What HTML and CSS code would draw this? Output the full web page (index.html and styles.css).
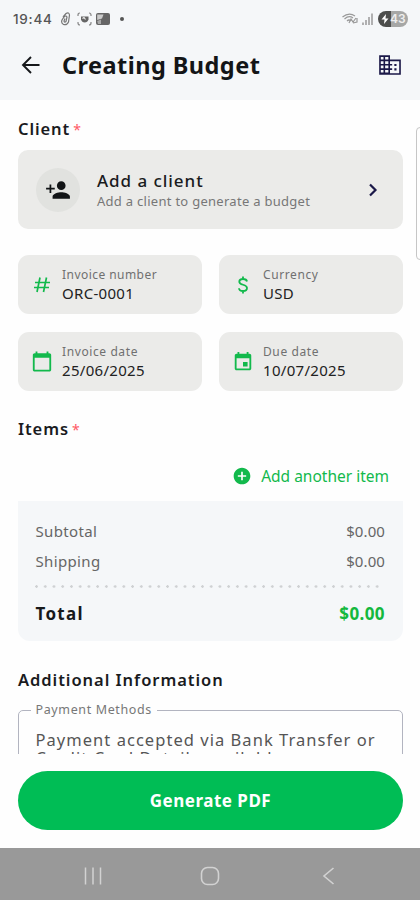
FILE: index.html
```html
<!DOCTYPE html>
<html lang="en">
<head>
<meta charset="utf-8">
<title>Creating Budget</title>
<link rel="stylesheet" href="styles.css">
</head>
<body>
<div class="screen">
  <div class="status">
    <span class="clock">19:44</span>
    <svg class="st-clip" width="11" height="14" viewBox="0 0 11 14" fill="none" stroke="#777" stroke-width="1.2"><path d="M3 5 6 1.5Q9-.3 9.500 3L8.500 10Q7 13.500 3.500 12.500 0.800 11 2 8L4 5Q6 3 7 5L6 9.500Q4.500 11 4 9L5 6.500"/></svg>
    <svg class="st-cap" width="15" height="14" viewBox="0 0 15 14" fill="none" stroke="#888" stroke-width="1.200"><path d="M1 4V3Q1 1 3 1M12 1Q14 1 14 3V4M14 10v1Q14 13 12 13M3 13Q1 13 1 11v-1"/><path d="M4 4.500h7.500v3Q10.500 10.500 7.700 10.500T4 7.500Z" fill="#666" stroke="none"/><path d="M5.500 6.500 7 5.500 8.500 7.500" stroke="#eee"/></svg>
    <svg class="st-img" width="14" height="12" viewBox="0 0 14 12"><rect width="14" height="12" rx="2" fill="#666"/><path d="M1.200 1.500H7.500L6 5.500 1.200 7Z" fill="#ccc"/><path d="M1.200 8 5 6.500V11H2Z" fill="#aaa"/></svg>
    <span class="dot"></span>
    <span class="grow"></span>
    <svg class="st-wifi" width="16" height="12" viewBox="0 0 16 12" fill="none" stroke="#999" stroke-width="1.200"><path d="M0.500 4Q7-1 13 3M2.500 6Q7 2 11 5M5 8Q7 6 9 8M7 10l2-4 2 3 3-4M11 10l4-1V5"/></svg>
    <svg class="st-sig" width="11" height="12" viewBox="0 0 11 12" stroke="#999" stroke-width="1.500"><path d="M1 9.500V12M4 7v5M7 4v8M10 0.500V12"/></svg>
    <span class="battery"><svg width="8" height="10" viewBox="0 0 8 10"><path d="M5 0 0.500 5.500H3.500L3 10 7.500 4.500H4.500Z" fill="#fff"/></svg>43</span>
  </div>
  <header class="bar">
    <svg class="back" width="24" height="24" viewBox="0 0 24 24" fill="none" stroke="#16181b" stroke-width="1.900"><path d="M20.500 12H4.500M12 4 4 12l8 8"/></svg>
    <h1>Creating Budget</h1>
    <svg class="biz" width="26" height="26" viewBox="0 0 24 24" fill="#1b1848"><path d="M12 7V3H2v18h20V7H12zM6 19H3.500v-2.500H6V19zm0-4H3.500v-2.500H6V15zm0-4H3.500V8.500H6V11zm0-4H3.500V4.500H6V7zm4.500 12H7.500v-2.500h3V19zm0-4H7.500v-2.500h3V15zm0-4H7.500V8.500h3V11zm0-4H7.500V4.500h3V7zm10 12.500H12v-3h2V15h-2v-2.500h2V11h-2V8.500h8.500v11zM18 11h-2v2h2v-2zm0 4h-2v2h2v-2z"/></svg>
  </header>
  <main class="content">
    <span class="scroll"></span>
    <h2 class="h-client">Client<i>*</i></h2>
    <div class="client">
      <span class="avatar"><svg width="26" height="26" viewBox="0 0 24 24" fill="#111416"><path d="M15 12c2.210 0 4-1.790 4-4s-1.790-4-4-4-4 1.790-4 4 1.790 4 4 4zM5.800 10V7H4.200v3H1v1.600h3.200v3.200h1.600v-3.200H9V10H5.800zM15 14c-2.670 0-8 1.340-8 4v2h16v-2c0-2.660-5.330-4-8-4z"/></svg></span>
      <div class="who"><b>Add a client</b><small>Add a client to generate a budget</small></div>
      <svg class="chev" width="10" height="14" viewBox="0 0 10 14" fill="none" stroke="#1b1848" stroke-width="2.200"><path d="M2 1.500 7.500 7 2 12.500"/></svg>
    </div>
    <div class="grid">
      <div class="field"><svg width="22" height="22" viewBox="0 0 22 22" fill="none" stroke="#12b94c" stroke-width="1.700"><path d="M9 3.500 6 18M15.500 3.500l-3 14.500M4 8.500h15M3 13.500h15"/></svg><div><small class="w-num">Invoice number</small><span>ORC-0001</span></div></div>
      <div class="field"><svg width="22" height="22" viewBox="0 0 22 22" fill="none" stroke="#12b94c" stroke-width="1.800"><path d="M15 7.500Q14.500 5 11 5 7.300 5 7.300 7.700C7.300 11.500 15 10 15 14Q15 17 11 17 7.200 17 7 14.200M11 2.500V5M11 17v2.500"/></svg><div><small class="w-cur">Currency</small><span>USD</span></div></div>
      <div class="field"><svg width="23" height="23" viewBox="0 0 24 24" fill="#12b94c"><path d="M20 3h-1V1h-2v2H7V1H5v2H4c-1.100 0-2 .9-2 2v16c0 1.100.9 2 2 2h16c1.100 0 2-.9 2-2V5c0-1.100-.9-2-2-2zm0 18H4V8h16v13z"/></svg><div><small>Invoice date</small><span>25/06/2025</span></div></div>
      <div class="field"><svg width="22" height="22" viewBox="0 0 24 24" fill="#12b94c"><path d="M17 12h-5v5h5v-5zM16 1v2H8V1H6v2H5c-1.110 0-1.990.9-1.990 2L3 19c0 1.100.89 2 2 2h14c1.100 0 2-.9 2-2V5c0-1.100-.9-2-2-2h-1V1h-2zm3 18H5V8h14v11z"/></svg><div><small>Due date</small><span>10/07/2025</span></div></div>
    </div>
    <h2 class="h-items">Items<i>*</i></h2>
    <div class="add"><svg width="20" height="20" viewBox="0 0 24 24" fill="#12b94c"><path d="M12 2C6.480 2 2 6.480 2 12s4.480 10 10 10 10-4.480 10-10S17.520 2 12 2zm5 11h-4v4h-2v-4H7v-2h4V7h2v4h4v2z"/></svg><span>Add another item</span></div>
    <div class="totals">
      <div class="row"><span>Subtotal</span><span class="amt">$0.00</span></div>
      <div class="row"><span>Shipping</span><span class="amt">$0.00</span></div>
      <div class="dots"></div>
      <div class="row total"><span>Total</span><span class="amt">$0.00</span></div>
    </div>
    <h2 class="h-add">Additional Information</h2>
    <fieldset class="pay"><legend>Payment Methods</legend><p>Payment accepted via Bank Transfer or<br>Credit Card Details available</p></fieldset>
  </main>
  <footer class="foot"><button>Generate PDF</button></footer>
  <nav class="nav">
    <svg width="18" height="20" viewBox="0 0 18 20" stroke="#d2d2d2" stroke-width="1.500"><path d="M1.500 1.500v17M9 1.500v17M16.500 1.500v17"/></svg>
    <svg width="20" height="20" viewBox="0 0 20 20" fill="none" stroke="#d2d2d2" stroke-width="1.600"><rect x="1.500" y="1.500" width="17" height="17" rx="6"/></svg>
    <svg width="18" height="20" viewBox="0 0 18 20" fill="none" stroke="#d2d2d2" stroke-width="1.600"><path d="M15.500 2 6 10l9.500 8"/></svg>
  </nav>
</div>
</body>
</html>
```
FILE: styles.css
```css
* { box-sizing: border-box; }
body { margin: 0; background: #fefefe; font-family: "Noto Sans", sans-serif; color: #1a1b1e; }
h1, h2, p { margin: 0; }
.screen { width: 420px; height: 900px; display: flex; flex-direction: column; overflow: hidden; }

.status { flex: none; height: 38px; padding: 0 12px 0 13px; display: flex; align-items: center; background: #f5f7f9; }
.clock { font: 500 13.500px/20px Inter, sans-serif; color: #555; letter-spacing: .75px; width: 47px; }
.st-cap { margin-left: 6px; }
.st-img { margin-left: 4px; }
.dot { width: 4px; height: 4px; border-radius: 50%; background: #555; margin-left: 10px; }
.grow { flex: 1; }
.st-sig { margin: 0 5px 0 4px; }
.battery { width: 30px; height: 16px; border-radius: 8px; background: linear-gradient(90deg, #4c4d4c 43%, #a6a7a6 43%); color: #eee; font: 600 12px/16px Inter, sans-serif; display: flex; align-items: center; padding-left: 3px; gap: 1px; }

.bar { flex: none; height: 62px; padding: 0 17px 8px 19px; display: flex; align-items: center; background: #f5f7f9; }
.bar h1 { margin-left: 19px; font-size: 23.500px; line-height: 32px; font-weight: 700; letter-spacing: .45px; flex: 1; color: #131517; white-space: nowrap; }

.content { position: relative; flex: none; height: 654px; padding: 0 17px 0 18px; overflow: hidden; }
.scroll { position: absolute; left: 416px; top: 27px; width: 12px; height: 133px; border: 1px solid #c6c6c6; border-radius: 4px; }
h2 { font-size: 16.500px; line-height: 22px; font-weight: 600; letter-spacing: .9px; white-space: nowrap; }
h2 i { font-style: normal; font-weight: 400; color: #ff5964; font-size: 14px; margin-left: 3px; }
.h-client { margin-top: 18px; }
.client { margin-top: 9px; height: 79px; background: #ebebe9; border-radius: 10px; display: flex; align-items: center; padding: 0 25px 0 18px; }
.avatar { width: 44px; height: 44px; border-radius: 50%; background: #e1e2df; display: flex; align-items: center; justify-content: center; }
.who { flex: 1; margin-left: 17px; display: flex; flex-direction: column; }
.who b { font-size: 17px; line-height: 22px; font-weight: 500; letter-spacing: .95px; }
.who small { font-size: 13px; line-height: 18px; color: #777; letter-spacing: .28px; white-space: nowrap; }

.grid { margin-top: 26px; display: grid; grid-template-columns: 184px 184px; gap: 18px 17px; }
.field { height: 59px; border-radius: 11px; background: #ebebe9; display: flex; align-items: center; padding-left: 13px; }
.field svg { width: 22px; flex: none; }
.field div { margin-left: 9px; display: flex; flex-direction: column; white-space: nowrap; }
.field small { font-size: 12px; line-height: 17px; color: #707070; letter-spacing: .6px; }
.field small.w-num { letter-spacing: .45px; }
.field span { font-size: 15px; line-height: 20px; color: #222; letter-spacing: .3px; }

.h-items { margin-top: 27px; }
.add { height: 60px; display: flex; align-items: flex-end; justify-content: flex-end; gap: 9px; padding: 0 14px 15px 0; color: #12b94c; font-size: 15.500px; line-height: 20px; }
.totals { height: 140px; background: #f5f7f9; border-radius: 0 0 12px 12px; padding: 15px 18px 0 17.500px; }
.row { display: flex; justify-content: space-between; height: 30px; line-height: 30px; font-size: 15px; letter-spacing: .35px; color: #666; }
.row .amt { letter-spacing: .1px; }
.dots { height: 3px; width: 348px; margin: 9px 0 0 -1px; background: radial-gradient(circle at 1.500px 1.500px, #cfd1d3 1.100px, transparent 1.500px) 0 0 / 8.740px 3px; }
.total { margin-top: 11px; font-size: 17px; font-weight: 700; letter-spacing: 1.300px; color: #17191b; }
.total .amt { color: #14b83e; letter-spacing: .4px; }
.h-add { margin-top: 28px; letter-spacing: .95px; }
.pay { margin: 10px 0 0; height: 110px; min-width: 0; border: 1.500px solid #b2b4c0; border-radius: 5px; padding: 0 16.500px; }
.pay legend { font-size: 12.500px; line-height: 18px; padding: 0 5px; margin-left: -5px; color: #777; letter-spacing: .63px; }
.pay p { margin-top: 12px; font-size: 16.500px; line-height: 18px; letter-spacing: 1.040px; color: #555; white-space: nowrap; }

.foot { flex: none; height: 94px; padding: 17px 17px 0 18px; background: #fefefe; }
.foot button { width: 100%; height: 59px; border: 0; border-radius: 30px; background: #00bd55; color: #fff; font: 700 17px/22px "Noto Sans", sans-serif; letter-spacing: .5px; }
.nav { flex: none; height: 52px; background: #999; display: flex; align-items: center; justify-content: center; gap: 98px; padding: 3px 0 0; }
```
